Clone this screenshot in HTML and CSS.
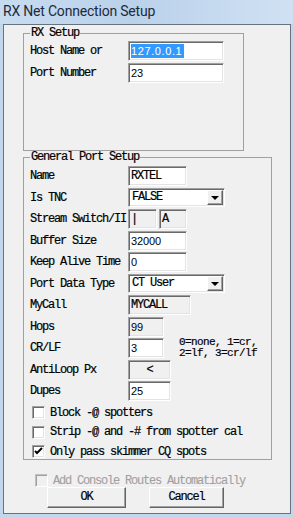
FILE: index.html
```html
<!DOCTYPE html>
<html>
<head>
<meta charset="utf-8">
<title>RX Net Connection Setup</title>
<link rel="stylesheet" href="styles.css">
</head>
<body>
<div class="window">
<div class="titlebar">RX Net Connection Setup</div>
<div class="client">

<fieldset class="group rx">
<legend>RX Setup</legend>
<div class="row">
<span class="lbl">Host Name or</span>
<div class="edit num w96"><span class="hilite">127.0.0.1</span></div>
</div>
<div class="row">
<span class="lbl">Port Number</span>
<div class="edit num w96">23</div>
</div>
</fieldset>

<fieldset class="group gen">
<legend>General Port Setup</legend>
<div class="row">
<span class="lbl">Name</span>
<div class="edit w59">RXTEL</div>
</div>
<div class="row">
<span class="lbl">Is TNC</span>
<div class="combo"><span class="combo-text">FALSE</span><span class="combo-btn"><i class="arrow"></i></span></div>
</div>
<div class="row">
<span class="lbl">Stream Switch/II</span>
<div class="edit ro w29">|</div>
<div class="edit ro w28 gap2">A</div>
</div>
<div class="row">
<span class="lbl">Buffer Size</span>
<div class="edit num w59">32000</div>
</div>
<div class="row">
<span class="lbl">Keep Alive Time</span>
<div class="edit num w59">0</div>
</div>
<div class="row">
<span class="lbl">Port Data Type</span>
<div class="combo"><span class="combo-text">CT User</span><span class="combo-btn"><i class="arrow"></i></span></div>
</div>
<div class="row">
<span class="lbl">MyCall</span>
<div class="edit ro w63">MYCALL</div>
</div>
<div class="row">
<span class="lbl">Hops</span>
<div class="edit ro num w36">99</div>
</div>
<div class="row">
<span class="lbl">CR/LF</span>
<div class="edit num w36">3</div>
<div class="note">0=none, 1=cr,<br>2=lf, 3=cr/lf</div>
</div>
<div class="row">
<span class="lbl">AntiLoop Px</span>
<div class="edit ro w43 center">&lt;</div>
</div>
<div class="row">
<span class="lbl">Dupes</span>
<div class="edit num w43">25</div>
</div>
<div class="chk">
<span class="box"></span><span>Block -@ spotters</span>
</div>
<div class="chk">
<span class="box"></span><span>Strip -@ and -# from spotter cal</span>
</div>
<div class="chk">
<span class="box"><svg width="9" height="9" viewBox="0 0 9 9"><polyline points="1,4 3,6 8,1" fill="none" stroke="#000" stroke-width="2"/></svg></span><span>Only pass skimmer CQ spots</span>
</div>
</fieldset>

<div class="chk auto disabled">
<span class="box"></span><span>Add Console Routes Automatically</span>
</div>

<div class="buttons">
<div class="btn ok">OK</div>
<div class="btn cancel">Cancel</div>
</div>

</div>
</div>
</body>
</html>
```

FILE: styles.css
```css
body {margin:0; background:#c3d7ec; font-family:"Liberation Mono", "Courier New", monospace; font-size:12px; letter-spacing:-1.2px; -webkit-text-stroke:0.2px; color:#000}
.window {width:293px; height:517px}
.titlebar {height:24px; box-sizing:border-box; padding-left:3px; line-height:23px; font-family:Roboto, "Liberation Sans", sans-serif; font-size:14px; letter-spacing:-0.2px; -webkit-text-stroke:0; color:#1b2b3e; background:linear-gradient(to right, #c8dcf0 0%, #bad1ea 45%, #c6daef 75%, #d0e1f3 100%)}
.client {margin-left:3px; width:288px; height:490px; box-sizing:border-box; border:1px solid #66727f; background:#f0f0f0; padding-left:19px}

.group {margin:0; padding:0 0 0 6px; border:1px solid #a0a0a0; min-width:0; box-sizing:border-box}
.group legend {padding:0 1px; margin:0; line-height:12px; height:12px}
.rx {width:221px; margin-top:2px; padding-top:2px; padding-bottom:67px}
.gen {width:249px; padding-top:3px; padding-bottom:0}

.row {display:flex; align-items:center; height:20px}
.row + .row {margin-top:1.5px}
.rx .row + .row {margin-top:2px}
.lbl {width:98px; flex:none; white-space:nowrap}

.edit {height:20px; box-sizing:border-box; border:1px solid; border-color:#a0a0a0 #fff #fff #a0a0a0; box-shadow:inset 1px 1px 0 #696969, inset -1px -1px 0 #e3e3e3; background:#fff; padding:1px 0 0 2px; line-height:16px; white-space:nowrap; flex:none; overflow:hidden}
.edit.ro {background:#f0f0f0}
.num {font-family:"Liberation Sans", sans-serif; font-size:11px; letter-spacing:-0.1px; -webkit-text-stroke:0}
.center {text-align:center; padding-left:0}
.gap2 {margin-left:2px}
.w96 {width:96px}
.w59 {width:59px}
.w29 {width:29px}
.w28 {width:28px}
.w63 {width:63px}
.w36 {width:36px}
.w43 {width:43px}
.hilite {background:#3399ff; color:#fff; letter-spacing:0.6px; padding:1px 1px 1px 0; border-right:1px solid #c8782d}

.combo {display:flex; width:97px; height:19px; box-sizing:border-box; border:1px solid; border-color:#a0a0a0 #fff #fff #a0a0a0; box-shadow:inset 1px 1px 0 #696969, inset -1px -1px 0 #e3e3e3; background:#fff; padding:1px; flex:none}
.combo-text {flex:1; padding:0 0 0 2px; line-height:15px}
.combo-btn {width:16px; height:15px; box-sizing:border-box; border:1px solid; border-color:#fff #646464 #646464 #fff; box-shadow:inset -1px -1px 0 #a0a0a0; background:#f0f0f0; display:flex; align-items:center; justify-content:center}
.arrow {width:0; height:0; border-left:4px solid transparent; border-right:4px solid transparent; border-top:4px solid #000; margin-top:1px}

.note {margin-left:15px; font-size:11px; letter-spacing:-0.6px; line-height:11px; white-space:nowrap}

.chk {display:flex; align-items:center; height:15px; padding-left:2px}
.row + .chk {margin-top:4px}
.chk + .chk {margin-top:4.5px}
.box {width:13px; height:13px; box-sizing:border-box; border:1px solid; border-color:#a0a0a0 #fff #fff #a0a0a0; box-shadow:inset 1px 1px 0 #696969, inset -1px -1px 0 #e3e3e3; background:#fff; margin-right:5px; display:flex; align-items:center; justify-content:center; flex:none}
.box svg {-webkit-text-stroke:0}
.auto {margin-top:14px; margin-left:10px; height:13px}
.disabled {color:#a0a0a0; -webkit-text-stroke:0.1px #a0a0a0}
.disabled .box {background:#f0f0f0; border-color:#c0c0c0 #fff #fff #c0c0c0; box-shadow:inset 1px 1px 0 #a0a0a0}

.buttons {display:flex; padding-left:24px}
.btn {height:21px; box-sizing:border-box; border:1px solid; border-color:#fff #646464 #646464 #fff; box-shadow:inset -1px -1px 0 #a0a0a0; text-align:center; line-height:19px}
.ok {width:79px}
.cancel {width:75px; margin-left:23px}
```
